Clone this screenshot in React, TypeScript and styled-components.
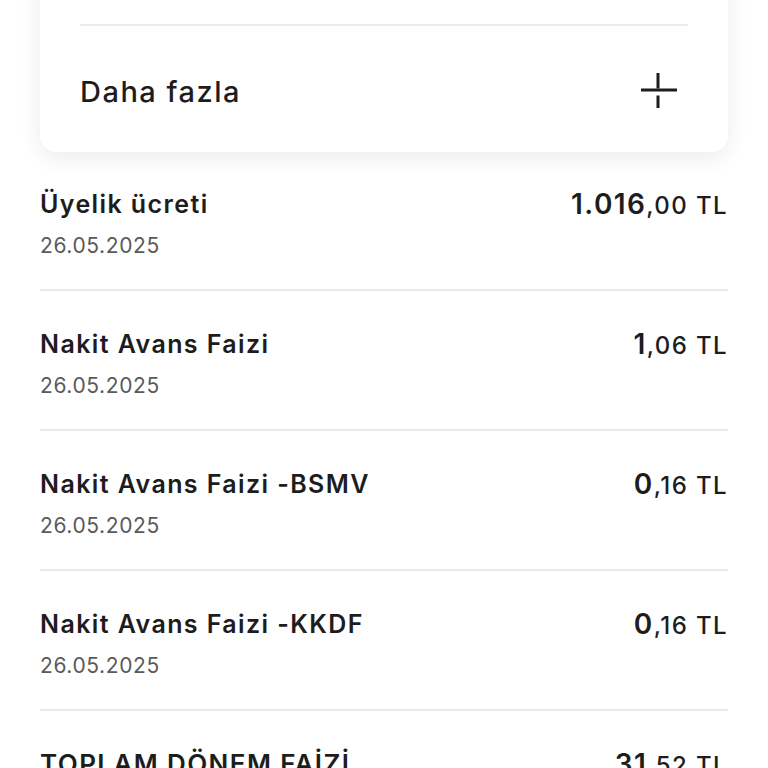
import React from 'react';
import styled, { createGlobalStyle } from 'styled-components';

const items = [
  { title: 'Üyelik ücreti', date: '26.05.2025', whole: '1.016', fraction: ',00' },
  { title: 'Nakit Avans Faizi', date: '26.05.2025', whole: '1', fraction: ',06' },
  { title: 'Nakit Avans Faizi -BSMV', date: '26.05.2025', whole: '0', fraction: ',16' },
  { title: 'Nakit Avans Faizi -KKDF', date: '26.05.2025', whole: '0', fraction: ',16' },
];

function PlusIcon() {
  return (
    <svg width="38" height="38" viewBox="0 0 38 38">
      <path d="M1 18h36" stroke="#1d1d1d" strokeWidth="3" />
      <path d="M18 1v15.5M18 23.5v12.5" stroke="#1d1d1d" strokeWidth="3" />
    </svg>
  );
}

function Amount({ whole, fraction }: { whole: string; fraction: string }) {
  return (
    <Price>
      <Whole>{whole}</Whole>
      <Fraction>{fraction} TL</Fraction>
    </Price>
  );
}

export default function App() {
  return (
    <Page>
      <GlobalStyle />
      <Card>
        <CardDivider />
        <MoreRow>
          <MoreLabel>Daha fazla</MoreLabel>
          <PlusIcon />
        </MoreRow>
      </Card>
      <List>
        {items.map((item) => (
          <Row key={item.title}>
            <Info>
              <Title>{item.title}</Title>
              <DateText>{item.date}</DateText>
            </Info>
            <Amount whole={item.whole} fraction={item.fraction} />
          </Row>
        ))}
        <TotalRow>
          <TotalTitle>TOPLAM DÖNEM FAİZİ</TotalTitle>
          <Amount whole="31" fraction=",52" />
        </TotalRow>
      </List>
    </Page>
  );
}

const GlobalStyle = createGlobalStyle`
  html, body {
    margin: 0;
    background: #ffffff;
    overflow: hidden;
  }
  body {
    font-family: Inter, "Noto Sans", sans-serif;
    color: #1d1d1d;
  }
`;

const Page = styled.div`
  height: 768px;
  overflow: hidden;
  padding: 0 40px;
`;

const Card = styled.div`
  margin-top: -40px;
  padding: 64px 40px 0;
  background: #ffffff;
  border-radius: 0 0 16px 16px;
  box-shadow: 0 6px 22px rgba(0, 0, 0, 0.08);
`;

const CardDivider = styled.div`
  height: 2px;
  background: #ececec;
`;

const MoreRow = styled.div`
  height: 126px;
  display: flex;
  align-items: center;
  justify-content: space-between;
  padding-top: 4px;
  box-sizing: border-box;
  svg {
    margin-right: 10px;
  }
`;

const MoreLabel = styled.span`
  font-size: 29px;
  font-weight: 500;
  letter-spacing: 1.5px;
`;

const List = styled.div`
  display: flex;
  flex-direction: column;
`;

const Row = styled.div`
  display: flex;
  justify-content: space-between;
  align-items: flex-start;
  padding: 37px 0 29px;
  border-bottom: 2px solid #e9e9e9;
  & + & {
    padding-top: 38px;
  }
`;

const TotalRow = styled(Row)`
  padding-top: 36px;
  border-bottom: none;
`;

const Info = styled.div`
  display: flex;
  flex-direction: column;
  gap: 13px;
`;

const Title = styled.div`
  font-size: 25px;
  line-height: 30px;
  font-weight: 600;
  letter-spacing: 1.4px;
`;

const TotalTitle = styled(Title)`
  font-size: 26px;
`;

const DateText = styled.div`
  font-size: 21px;
  line-height: 28px;
  color: #5a5a5a;
  letter-spacing: 0.6px;
`;

const Price = styled.div`
  display: flex;
  align-items: baseline;
  line-height: 30px;
  letter-spacing: 1.4px;
`;

const Whole = styled.span`
  font-size: 28px;
  font-weight: 600;
`;

const Fraction = styled.span`
  font-size: 24px;
  font-weight: 500;
`;
